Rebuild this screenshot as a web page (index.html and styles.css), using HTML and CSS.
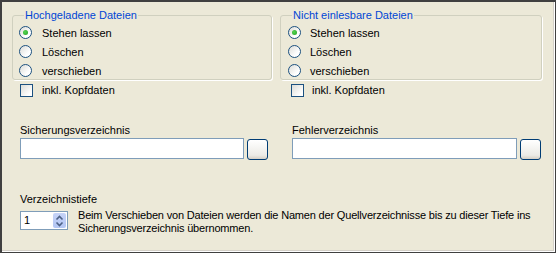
FILE: index.html
```html
<!DOCTYPE html>
<html lang="de">
<head>
    <meta charset="UTF-8">
    <title>Dateioptionen</title>
    <link rel="stylesheet" href="styles.css">
</head>
<body>
    <div class="panel">
        <div class="columns">
            <div class="col col-left">
                <fieldset class="group">
                    <legend>Hochgeladene Dateien</legend>
                    <label class="option"><span class="radio checked"></span>Stehen lassen</label>
                    <label class="option"><span class="radio"></span>Löschen</label>
                    <label class="option"><span class="radio"></span>verschieben</label>
                </fieldset>
                <label class="check"><span class="box"></span>inkl. Kopfdaten</label>
            </div>
            <div class="col col-right">
                <fieldset class="group">
                    <legend>Nicht einlesbare Dateien</legend>
                    <label class="option"><span class="radio checked"></span>Stehen lassen</label>
                    <label class="option"><span class="radio"></span>Löschen</label>
                    <label class="option"><span class="radio"></span>verschieben</label>
                </fieldset>
                <label class="check"><span class="box"></span>inkl. Kopfdaten</label>
            </div>
        </div>

        <div class="columns paths">
            <div class="path">
                <div class="caption">Sicherungsverzeichnis</div>
                <div class="path-row">
                    <div class="textbox"></div>
                    <div class="browse"></div>
                </div>
            </div>
            <div class="path path-right">
                <div class="caption">Fehlerverzeichnis</div>
                <div class="path-row">
                    <div class="textbox"></div>
                    <div class="browse"></div>
                </div>
            </div>
        </div>

        <div class="depth">
            <div class="caption">Verzeichnistiefe</div>
            <div class="depth-row">
                <div class="spin">
                    <span class="spin-value">1</span>
                    <span class="spin-btns">
                        <svg width="13" height="16" viewBox="0 0 13 16">
                            <path d="M3.5 6.5 L6.5 3.5 L9.5 6.5" fill="none" stroke="#4d6185" stroke-width="1.6"/>
                            <path d="M3.5 9.5 L6.5 12.5 L9.5 9.5" fill="none" stroke="#4d6185" stroke-width="1.6"/>
                        </svg>
                    </span>
                </div>
                <p class="hint">Beim Verschieben von Dateien werden die Namen der Quellverzeichnisse bis zu dieser Tiefe ins<br>Sicherungsverzeichnis übernommen.</p>
            </div>
        </div>
    </div>
</body>
</html>
```

FILE: styles.css
```css
body {
    margin: 0;
    padding: 0;
    background: #ece9d8;
    font-family: Tahoma, "Liberation Sans", Arial, sans-serif;
    font-size: 11px;
    color: #000000;
}

.panel {
    box-sizing: border-box;
    width: 556px;
    height: 253px;
    background: #ece9d8;
    border-top: 2px solid #404040;
    border-left: 2px solid #404040;
    border-right: 1px solid #404040;
    border-bottom: 1px solid #404040;
    box-shadow: inset -1px -1px 0 #ffffff, inset -2px -2px 0 #d4d0c8;
    padding: 0 0 0 10px;
}

.columns {
    display: flex;
}

.col-left {
    width: 260px;
}

.col-right {
    width: 262px;
    margin-left: 8px;
}

.group {
    box-sizing: border-box;
    height: 71px;
    margin: 7px 0 0;
    padding: 2px 0 0 6px;
    border: 1px solid #d0d0bf;
    border-radius: 3px;
    box-shadow: 1px 1px 0 #ffffff;
}

.group legend {
    color: #0046d5;
    padding: 0 1px;
    margin-left: 5px;
    line-height: 12px;
}

.option {
    display: flex;
    align-items: center;
    height: 19px;
}

.col-right .option {
    margin-left: 1px;
}

.radio {
    box-sizing: border-box;
    width: 13px;
    height: 13px;
    border: 1px solid #1c5180;
    border-radius: 50%;
    background: linear-gradient(135deg, #dcdcd7, #ffffff 70%);
    margin-right: 10px;
    display: flex;
    align-items: center;
    justify-content: center;
}

.col-right .radio {
    margin-right: 9px;
}

.radio.checked::after {
    content: "";
    width: 5px;
    height: 5px;
    border-radius: 50%;
    background: radial-gradient(circle at 40% 40%, #55d551, #21a121);
}

.check {
    display: flex;
    align-items: center;
    height: 20px;
    margin: 0 0 0 8px;
}

.col-right .check {
    margin-left: 11px;
}

.box {
    box-sizing: border-box;
    width: 13px;
    height: 13px;
    border: 1px solid #1c5180;
    background: linear-gradient(135deg, #dcdcd7, #ffffff 80%);
    margin-right: 9px;
}

.col-right .box {
    margin-right: 8px;
}

.paths {
    margin-top: 23px;
}

.path {
    display: flex;
    flex-direction: column;
    margin-left: 8px;
}

.path-right {
    margin-left: 24px;
}

.caption {
    line-height: 14px;
    height: 14px;
}

.path-row {
    display: flex;
    align-items: flex-start;
    gap: 3px;
    margin-top: 1px;
}

.textbox {
    box-sizing: border-box;
    width: 224px;
    height: 21px;
    border: 1px solid #7f9db9;
    background: #ffffff;
}

.path-right .textbox {
    width: 225px;
}

.browse {
    box-sizing: border-box;
    width: 21px;
    height: 21px;
    margin-top: 1px;
    border: 1px solid #003c74;
    border-radius: 3px;
    background: linear-gradient(180deg, #ffffff, #ecebe6 80%, #d6d0c5);
}

.depth {
    margin: 32px 0 0 8px;
}

.depth-row {
    display: flex;
    align-items: flex-start;
}

.spin {
    box-sizing: border-box;
    display: flex;
    align-items: center;
    justify-content: space-between;
    flex-shrink: 0;
    width: 48px;
    height: 19px;
    margin-top: 5px;
    border: 1px solid #7f9db9;
    background: #ffffff;
    padding: 0 1px 0 3px;
}

.spin-value {
    line-height: 15px;
}

.spin-btns {
    display: flex;
    width: 13px;
    height: 15px;
    background: linear-gradient(180deg, #c6d3f7, #b3c6f4);
    border-radius: 2px;
    overflow: hidden;
}

.hint {
    margin: 3px 0 0 10px;
    line-height: 13px;
    white-space: nowrap;
    letter-spacing: -0.18px;
}
```
